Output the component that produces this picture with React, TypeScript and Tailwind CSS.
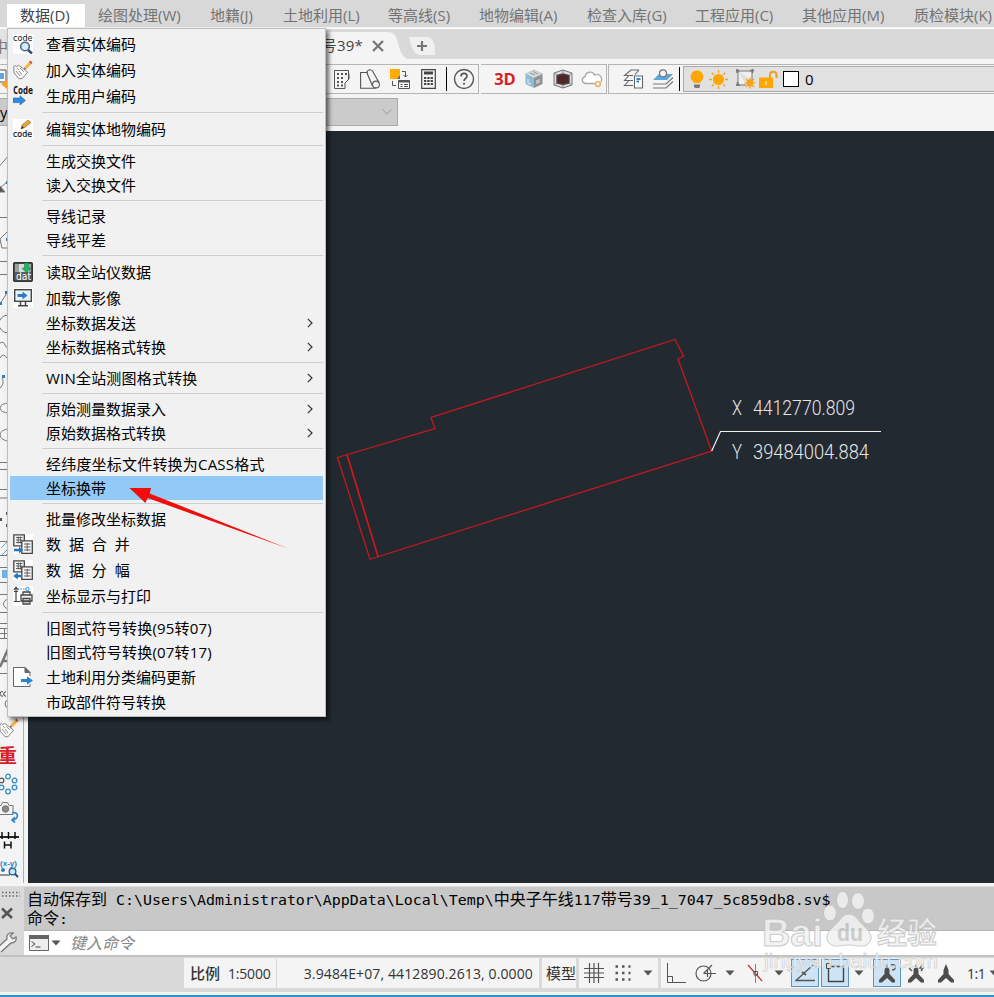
import React from 'react';
import clsx from 'clsx';

interface MenuEntry {
  label?: string;
  icon?: React.ReactNode;
  submenu?: boolean;
  active?: boolean;
  tall?: boolean;
  wide?: boolean;
  mixed?: boolean;
}

const topMenus = [
  { label: '数据(D)', width: 'w-[78px]', open: true },
  { label: '绘图处理(W)', width: 'w-[112px]' },
  { label: '地籍(J)', width: 'w-[73px]' },
  { label: '土地利用(L)', width: 'w-[105px]' },
  { label: '等高线(S)', width: 'w-[91px]' },
  { label: '地物编辑(A)', width: 'w-[108px]' },
  { label: '检查入库(G)', width: 'w-[108px]' },
  { label: '工程应用(C)', width: 'w-[107px]' },
  { label: '其他应用(M)', width: 'w-[112px]' },
  { label: '质检模块(K)', width: 'w-[110px]' },
];

const CodeSearchIcon = () => (
  <svg width="20" height="20" viewBox="0 0 20 20" className="bg-white">
    <text x="0" y="6.500" fontSize="8.500" textLength="19.500" lengthAdjust="spacingAndGlyphs" fontFamily="DejaVu Sans" fill="#111">code</text>
    <circle cx="12" cy="12.500" r="4.300" fill="#dcebf7" stroke="#47698c" strokeWidth="1.600" />
    <path d="M15 16l4 3.500" stroke="#294a70" strokeWidth="2.400" />
  </svg>
);

const TagPencilIcon = () => (
  <svg width="20" height="20" viewBox="0 0 20 20" fill="none">
    <path d="M.7 6.500l2-1 1 1.200 1.700-1.300 1.700.8 7.500 6-5.500 6.500H6L1 13z" fill="#f8f8f8" stroke="#888" />
    <path d="M4 8l2 2M3 11l4 5M7 8l4 4M6 11l3 4" stroke="#999" />
    <path d="M11 9.500l1-3.500 4.500-4.500 2.400 2.300-4.500 4.500z" fill="#f1b74d" />
    <path d="M16 1.800L17.500.500l2 2.200-1.200 1.400z" fill="#d94742" />
    <path d="M11 9.500l.6-2 1.500 1.400z" fill="#444" />
  </svg>
);

const CodeArrowIcon = () => (
  <svg width="20" height="20" viewBox="0 0 20 20">
    <text x="0" y="8" fontSize="10" textLength="20" lengthAdjust="spacingAndGlyphs" fontWeight="700" fontFamily="DejaVu Sans Mono" fill="#111">Code</text>
    <path d="M0 12h7V9.800l5.500 4.600L7 19v-2.400H0z" fill="#308bdf" stroke="#1f65ab" strokeWidth=".6" />
  </svg>
);

const CodeEditIcon = () => (
  <svg width="20" height="20" viewBox="0 0 20 20" className="bg-white">
    <path d="M8 10l1-4 6-5 3 2.400-6 5z" fill="#e6a43f" stroke="#996622" strokeWidth=".6" />
    <path d="M8 10l1-3 2 1.800z" fill="#333" />
    <text x="0" y="18" fontSize="8.500" textLength="19" lengthAdjust="spacingAndGlyphs" fontFamily="DejaVu Sans" fill="#111" stroke="#111" strokeWidth=".2">code</text>
  </svg>
);

const DatIcon = () => (
  <svg width="20" height="20" viewBox="0 0 20 20">
    <rect x=".7" y=".7" width="18.6" height="18.6" rx="1" fill="#5a5a5a" stroke="#333" strokeWidth="1.400" />
    <rect x="2" y="2" width="16" height="8" fill="#9b9f9d" />
    <rect x="6" y="2" width="10" height="8" fill="#d7dcd9" />
    <path d="M11.500 1h4v5H18l-4.500 5L9 6h2.500z" fill="#1fb463" stroke="#127941" strokeWidth=".5" />
    <text x="3" y="18" fontSize="10" textLength="15" lengthAdjust="spacingAndGlyphs" fontFamily="DejaVu Sans" fill="#fff">dat</text>
  </svg>
);

const MonitorIcon = () => (
  <svg width="20" height="20" viewBox="0 0 20 20" className="bg-white">
    <rect x="1.700" y="1.700" width="16.600" height="11.600" fill="#e7f3fb" stroke="#444" strokeWidth="1.400" />
    <path d="M4.500 6h5V3.600l5 3.900-5 3.900V9h-5z" fill="#3478d0" />
    <path d="M7.500 14v3.200M12.500 14v3.200M5 17.800h10" stroke="#444" strokeWidth="1.500" />
  </svg>
);

const SheetsIcon = ({ split }: { split?: boolean }) => (
  <svg width="20" height="20" viewBox="0 0 20 20" className="bg-white" fill="none">
    <path d="M.8.800h10.500v11H.8z" fill="#f5f5f5" stroke="#444" strokeWidth="1.300" />
    <path d="M3 3.500h6.500M3 6h6.500M3 8.500h6M5.200 2.500v7M7.400 2.500v7" stroke="#555" strokeWidth=".9" />
    <path d="M8.800 6.800h10.500v12.500H8.800z" fill="#f5f5f5" stroke="#444" strokeWidth="1.300" />
    <path d="M11 10h6.500M11 13h6.500M11 16h6.500M14.200 9v8" stroke="#555" strokeWidth=".9" />
    {split ? (
      <path d="M9 14.700H4.800v-2.300L.2 16l4.600 3.500v-2.200H9z" fill="#2475c6" />
    ) : (
      <path d="M1 14.700h5v-2.300l4 3.600-4 3.500v-2.200H1z" fill="#2475c6" />
    )}
  </svg>
);

const PrintCoordIcon = () => (
  <svg width="20" height="20" viewBox="0 0 20 20" className="bg-white" fill="none" stroke="#444">
    <path d="M3 2v13.500M.8 4L3 1.200 5.200 4M1 15.500h6M1 5.500h4" strokeWidth="1.200" />
    <path d="M5 3h8" stroke="#328bd0" strokeDasharray="1.500 1" />
    <circle cx="14.500" cy="3" r="1.700" stroke="#328bd0" />
    <path d="M10 9V6h7v3M8 9h11v6H8zM10 12.500h7V18h-7zM11 15.500h5" strokeWidth="1.300" fill="#f2f2f2" />
  </svg>
);

const PageArrowIcon = () => (
  <svg width="20" height="20" viewBox="0 0 20 20" fill="none">
    <path d="M17 9V5.500L12 .500H.5v19H17V17" fill="#fff" stroke="#666" />
    <path d="M12 .500v5h5z" fill="#666" stroke="#666" />
    <path d="M8 12h6V9.200l6 4.300-6 4.300V15H8z" fill="#2586cf" />
  </svg>
);

const menuGroups: MenuEntry[][] = [
  [
    { label: '查看实体编码', icon: <CodeSearchIcon />, tall: true },
    { label: '加入实体编码', icon: <TagPencilIcon />, tall: true },
    { label: '生成用户编码', icon: <CodeArrowIcon />, tall: true },
  ],
  [{ label: '编辑实体地物编码', icon: <CodeEditIcon />, tall: true }],
  [{ label: '生成交换文件' }, { label: '读入交换文件' }],
  [{ label: '导线记录' }, { label: '导线平差' }],
  [
    { label: '读取全站仪数据', icon: <DatIcon />, tall: true },
    { label: '加载大影像', icon: <MonitorIcon />, tall: true },
    { label: '坐标数据发送', submenu: true },
    { label: '坐标数据格式转换', submenu: true },
  ],
  [{ label: 'WIN全站测图格式转换', submenu: true, mixed: true }],
  [
    { label: '原始测量数据录入', submenu: true },
    { label: '原始数据格式转换', submenu: true },
  ],
  [{ label: '经纬度坐标文件转换为CASS格式', mixed: true }, { label: '坐标换带', active: true }],
  [
    { label: '批量修改坐标数据' },
    { label: '数 据 合 并', icon: <SheetsIcon />, tall: true, wide: true },
    { label: '数 据 分 幅', icon: <SheetsIcon split />, tall: true, wide: true },
    { label: '坐标显示与打印', icon: <PrintCoordIcon />, tall: true },
  ],
  [
    { label: '旧图式符号转换(95转07)', mixed: true },
    { label: '旧图式符号转换(07转17)', mixed: true },
    { label: '土地利用分类编码更新', icon: <PageArrowIcon />, tall: true },
    { label: '市政部件符号转换' },
  ],
];

const MenuItem: React.FC<{ entry: MenuEntry }> = ({ entry }) => (
  <li
    className={clsx(
      'mx-0.5 flex items-center pl-[3px] text-[15px] leading-none text-black',
      entry.tall ? 'h-[26px]' : 'h-6',
      entry.active && 'bg-[#91c9f7]'
    )}
  >
    <span className="flex w-[33px] shrink-0">{entry.icon}</span>
    <span
      className={clsx(
        'whitespace-pre',
        entry.wide && '[word-spacing:4px]',
        entry.mixed && 'tracking-[0.2px]'
      )}
    >
      {entry.label}
    </span>
    {entry.submenu && (
      <svg width="6" height="10" viewBox="0 0 6 10" fill="none" className="mr-[10px] ml-auto">
        <path d="M.8.800L5 5 .8 9.200" stroke="#333" strokeWidth="1.200" />
      </svg>
    )}
  </li>
);

const DataMenu = () => (
  <div className="absolute top-[28px] left-[7px] w-[319px] border border-[#bdbdbd] bg-[#f1f1f1] pt-0.5 pb-0.5 shadow-[3px_3px_4px_rgba(0,0,0,0.55)]">
    {menuGroups.map((group, i) => (
      <React.Fragment key={i}>
        {i > 0 && (
          <div className="flex h-[7px] items-center pr-0.5 pl-[34px]">
            <div className="h-px w-full bg-[#cfcfcf]" />
          </div>
        )}
        <ul>
          {group.map((entry) => (
            <MenuItem key={entry.label} entry={entry} />
          ))}
        </ul>
      </React.Fragment>
    ))}
  </div>
);

const TabStrip = () => (
  <div className="relative flex h-[31px] overflow-hidden border-t border-white bg-[#d9d9d9]">
    <div className="flex w-[300px] shrink-0 items-center bg-[#e2e2e2] pt-1 text-[15px] text-[#777]">
      <span className="-ml-[7px]">中</span>
    </div>
    <div className="mt-[3px] flex w-[88px] shrink-0 items-center justify-end bg-[#f4f4f4] text-[15px] text-[#444]">
      <span className="shrink-0 tracking-[0.2px] whitespace-nowrap">号39*</span>
      <svg width="12" height="12" viewBox="0 0 12 12" className="mr-1 ml-[9px] shrink-0">
        <path d="M1 1l10 10M11 1L1 11" stroke="#777" strokeWidth="2.300" />
      </svg>
    </div>
    <svg width="21" height="28" viewBox="0 0 21 28" className="mt-[3px] shrink-0">
      <path d="M0 0c6 0 8 4 10 11s3 13 11 17H0z" fill="#f4f4f4" />
    </svg>
    <svg width="27" height="18" viewBox="0 0 27 18" className="mt-[8px] shrink-0">
      <path d="M0 0h18c6 0 8 6 8 18H12C5 18 2 10 0 0z" fill="#f0f0f0" />
      <path d="M13 4v10M8 9h10" stroke="#777" strokeWidth="2.200" />
    </svg>
  </div>
);

const Slot: React.FC<{ className?: string; children: React.ReactNode }> = ({ className, children }) => (
  <span className={clsx('flex shrink-0 items-center justify-center', className ?? 'w-[29px]')}>{children}</span>
);

const Toolbar = () => (
  <div className="h-[72px] bg-[#f4f4f4] pt-[5px]">
    <div className="flex h-[30px]">
      <div className="flex w-[479px] shrink-0 items-center border border-l-0 border-[#b5b5b5]">
        <svg width="20" height="22" viewBox="0 0 20 22" className="-ml-[13px] mr-auto">
          <path d="M3 2h16v12H3z" fill="#fff" stroke="#555" />
          <path d="M8 5h9v6H8z" fill="#65a6d8" />
          <path d="M14 16l6-4v9z" fill="#f5a623" />
        </svg>
        <Slot>
          <svg width="16" height="19" viewBox="0 0 16 19" fill="none" stroke="#555">
            <path d="M11 18.500H.5V.500h14V10M11 18.500V13l4-4v-5" />
            <path d="M3 4h2M7 4h2M11 4h2M3 8h2M7 8h2M3 12h2M7 12h2M3 15.500h2M7 15.500h2" strokeWidth="1.800" />
          </svg>
        </Slot>
        <Slot>
          <svg width="21" height="20" viewBox="0 0 21 20" fill="none" stroke="#555" strokeWidth="1.100">
            <path d="M7.500 3.500H.6v15.800h15" />
            <path d="M12.500 17L7 4c-.5-3 3.500-4.500 5.500-2L19 13.500" />
            <circle cx="16" cy="15.500" r="3.400" />
          </svg>
        </Slot>
        <Slot>
          <svg width="20" height="20" viewBox="0 0 20 20" fill="none" stroke="#555">
            <path d="M0 0h10v10H7l-3 0H0z" fill="#ffab00" stroke="none" />
            <path d="M7 10l3-4v4z" fill="#666" stroke="none" />
            <path d="M12 2.500h3.500V8M13.500 6l2 2 2-2M2.500 12v4.500H6" />
            <path d="M8.500 11.500h11v8h-11z" fill="#fff" />
            <path d="M8.500 12.500h11" strokeWidth="2" />
            <path d="M10.500 15.500h2M14 15.500h4M10.500 17.500h2M14 17.500h4" />
          </svg>
        </Slot>
        <Slot>
          <svg width="15" height="20" viewBox="0 0 15 20" fill="none" stroke="#444">
            <path d="M.7.700h13.600v18.600H.7z" strokeWidth="1.200" />
            <path d="M3 4h9" strokeWidth="3" />
            <path d="M3 9h9M3 12h9M3 15h9" strokeWidth="2" strokeDasharray="2.300 1" />
          </svg>
        </Slot>
        <span className="ml-[3px] h-6 w-px shrink-0 bg-black" />
        <Slot className="ml-[2px] w-[29px]">
          <svg width="22" height="22" viewBox="0 0 22 22" fill="none" stroke="#555">
            <circle cx="11" cy="11" r="9.500" strokeWidth="1.400" />
            <path d="M8 8.500c0-4 6-4 6-.500 0 2.500-3 2.500-3 5M11 14.800v1.900" strokeWidth="1.700" />
          </svg>
        </Slot>
      </div>
      <div className="ml-0.5 flex w-[126px] shrink-0 items-center border border-l-0 border-[#b5b5b5] pl-2.5">
        <Slot className="w-[28px] text-[16.5px] font-bold text-[#d71e26]">3D</Slot>
        <Slot>
          <svg width="20" height="20" viewBox="0 0 20 20">
            <path d="M10 1l8.500 4L10 9 1.500 5z" fill="#d9dddf" stroke="#aaa" strokeWidth=".6" />
            <path d="M1.500 5L10 9v10l-8.500-4z" fill="#8cbcd6" />
            <path d="M18.500 5L10 9v10l8.500-4z" fill="#8b9296" />
            <path d="M4 10v4l3 1M13 11v4M15 10v4" stroke="#eee" fill="none" />
            <path d="M6 4l5 2M9 2.500l5 2.500" stroke="#8a9499" />
          </svg>
        </Slot>
        <Slot>
          <svg width="20" height="20" viewBox="0 0 20 20" fill="none">
            <path d="M10 1l9 3v12l-9 3-9-3V4z" fill="#ddd" stroke="#777" />
            <path d="M4 6.500l6-1.500 6 1.500v7.500l-6 1.500L4 14z" fill="#54242a" stroke="#444" strokeWidth="1.400" />
            <path d="M1 4l3 2.500M19 4l-3 2.500M1 16l3-2M19 16l-3-2M10 1v4M10 15.500V19" stroke="#888" />
          </svg>
        </Slot>
        <Slot>
          <svg width="22" height="18" viewBox="0 0 22 18" fill="none">
            <path d="M5 13.500H4a3.500 3.500 0 0 1 0-6.800A5 5 0 0 1 13.500 5a4.300 4.300 0 0 1 4.500 8.500z" fill="#fff" stroke="#aaa" strokeWidth="1.400" />
            <circle cx="17" cy="14" r="2.300" fill="#fff" stroke="#efb77b" strokeWidth="1.800" />
          </svg>
        </Slot>
      </div>
      <div className="ml-px flex flex-1 items-center border border-r-0 border-[#b5b5b5] pl-[10px]">
        <Slot>
          <svg width="21" height="20" viewBox="0 0 21 20" fill="none" stroke="#666" strokeWidth="1.100">
            <path d="M16 1H8L1.500 6.500H10M16 1l-4 4.500M5.500 7l-4 4.500H10M5.500 12l-4 4.500H10" />
            <path d="M11.500 7h8v12h-8z" fill="#fff" />
            <path d="M13.500 10h4M13.500 12.500h2.500" stroke="#2988cc" strokeWidth="1.800" />
          </svg>
        </Slot>
        <Slot>
          <svg width="22" height="21" viewBox="0 0 22 21" fill="none" stroke="#777" strokeWidth="1.200">
            <path d="M1 11l6-6h14l-6 6z" fill="#5ba5d8" stroke="none" />
            <circle cx="11" cy="4.300" r="3.500" fill="#f4f4f4" />
            <path d="M1 15h13l7-6.500M1 19h13l7-6.500" />
          </svg>
        </Slot>
        <span className="ml-0.5 h-6 w-px bg-black" />
        <div className="ml-[3px] flex h-[26px] flex-1 items-center border border-r-0 border-[#aaa] bg-[#e1e1e1] pl-[3px]">
          <Slot className="w-5">
            <svg width="14" height="19" viewBox="0 0 14 19">
              <path d="M7 .500a6.300 6.300 0 0 1 4 11.200L10 13H4l-1-1.300A6.300 6.300 0 0 1 7 .500z" fill="#ffa600" />
              <path d="M4 14.500h6v2L9 18H5l-1-1.500z" fill="#777" />
            </svg>
          </Slot>
          <Slot className="w-[22px]">
            <svg width="19" height="19" viewBox="0 0 19 19" stroke="#f5a31a" strokeWidth="1.300">
              <circle cx="9.500" cy="9.500" r="5.500" fill="#ffa600" stroke="none" />
              <path d="M9.500 0v3M9.500 16v3M0 9.500h3M16 9.500h3M2.800 2.800l2 2M14.200 14.200l2 2M16.200 2.800l-2 2M4.800 14.200l-2 2" />
            </svg>
          </Slot>
          <Slot className="ml-[5px] w-[23px]">
            <svg width="20" height="20" viewBox="0 0 20 20" fill="none" stroke="#777">
              <path d="M2 2h14v9M10 16H2V2" fill="#f0f0f0" />
              <path d="M0 1.500h3.500M1 0v4M14 1.500h4M16.500 0v4M0 16h4M1.500 13v4" strokeWidth="1.600" />
              <circle cx="14" cy="14" r="3.500" fill="#ffa600" stroke="none" />
              <path d="M14 8.500v11M8.500 14h11M10 10l8 8M18 10l-8 8" stroke="#f5a31a" strokeWidth="1.200" />
            </svg>
          </Slot>
          <Slot className="w-[22px]">
            <svg width="19" height="19" viewBox="0 0 19 19" fill="none">
              <path d="M11 8V5c0-4.500 6.500-4.500 6.500 0v3" stroke="#e8a02b" strokeWidth="2" />
              <path d="M0 7.500h14V18H0z" fill="#ffa600" />
              <path d="M7 11v4" stroke="#fff4cd" strokeWidth="1.200" />
            </svg>
          </Slot>
          <span className="ml-1 h-4 w-4 border border-black bg-white" />
          <span className="ml-1.5 text-[15px] text-black">0</span>
        </div>
      </div>
    </div>
    <div className="mt-[4px] flex h-[28px] w-[398px] items-center justify-between border border-[#aaa] border-l-0 bg-[#cbcbcb] pr-[5px]">
      <span className="text-[15px] text-black">y</span>
      <svg width="10" height="6" viewBox="0 0 10 6" fill="none">
        <path d="M.5.500L5 5 9.500.500" stroke="#999" />
      </svg>
    </div>
  </div>
);

const Tool: React.FC<{ children: React.ReactNode }> = ({ children }) => (
  <div className="-ml-px flex h-7 w-5 shrink-0 items-center">{children}</div>
);

const DrawTools = () => (
  <div className="flex w-7 shrink-0 flex-col overflow-hidden bg-[#f4f4f4]">
    <div className="w-6 flex-1 border-r border-[#b0b0b0]">
      {/* draw and modify tools, mostly behind the open menu */}
      <svg width="23" height="583" viewBox="0 131 23 583" fill="none" stroke="#777">
        <path d="M-3 169L9 155M-1 189L9 180M0 217.500h20M0 239l7-7M0 239l2 9h9M0 261.500h20M0 274.500h20" />
        <path d="M-1 185v7h6z" fill="#555" />
        <path d="M0 304l7-11" />
        <path d="M0 302h2v3H0zM5 291h2v3H5zM6 181h2v3H6zM6 238h3v3H6z" fill="#2b80c1" stroke="none" />
        <circle cx="8" cy="324" r="9" />
        <path d="M7 322h2" stroke="#2b80c1" strokeWidth="2" />
        <path d="M0 343q4-2 5 2t5 1M0 358q3-6 7 0" />
        <path d="M0 388c3-2 4-7 2-10" />
        <path d="M2 375h3v3H2z" fill="#2b80c1" stroke="none" />
        <ellipse cx="9" cy="408" rx="9" ry="5" />
        <ellipse cx="9" cy="435" rx="9" ry="6" />
        <path d="M0 462.500h20M0 469.500h20M0 489.500h20M0 498h20" />
        <path d="M0 518h2v3H0zM6 512h2v3H6zM6 524h2v3H6z" fill="#555" stroke="none" />
        <path d="M0 541.500h20v14H0" />
        <path d="M1 548l6-6M2 555l8-8M6 555l4-4" stroke="#69a7d5" />
        <path d="M0 567.500h20v15H0" />
        <path d="M2 570h9v8H2z" fill="#6fb2e2" stroke="none" />
        <path d="M0 594.500h20M0 612.500h20" />
        <circle cx="8" cy="604" r="4.500" />
        <path d="M0 623.500h20M0 628.500h20M0 633.500h20M0 638.500h20M4.500 628v11" />
        <path d="M0 667l8-18M3 661h5" strokeWidth="2.500" />
        <path d="M0 673.500h20" />
        <path d="M3 692c-4-2-4 5 0 4M6 692c-3-1-3 5 0 4" stroke="#333" />
        <circle cx="9" cy="704" r="4" />
      </svg>
      <Tool>
        <TagPencilIcon />
      </Tool>
      <Tool>
        <span className="-ml-px text-[19px] leading-none font-bold text-[#d8202a]">重</span>
      </Tool>
      <Tool>
        <svg width="20" height="22" viewBox="0 0 20 22" fill="none" stroke="#388dc3" strokeWidth="1.300">
          <circle cx="9" cy="3.500" r="2.300" />
          <circle cx="15.500" cy="7.500" r="2.300" />
          <circle cx="15.500" cy="14.500" r="2.300" />
          <circle cx="9" cy="18.500" r="2.300" />
          <circle cx="2.500" cy="14.500" r="2.300" />
          <circle cx="2.500" cy="7.500" r="2.300" stroke="#555" />
        </svg>
      </Tool>
      <Tool>
        <svg width="20" height="22" viewBox="0 0 20 22" fill="none" stroke="#777">
          <path d="M-2 4.500h4l1.500-3h5l1.500 3h4v9h-16z" />
          <circle cx="6.500" cy="8" r="3.300" fill="#888" />
          <path d="M13 12c7-2 7 6 1 7M16 16l-3 3 3 2.500" stroke="#3189c6" strokeWidth="1.700" />
        </svg>
      </Tool>
      <Tool>
        <svg width="20" height="20" viewBox="0 0 20 20" fill="none" stroke="#111">
          <path d="M0 7h20" strokeWidth="1.800" />
          <path d="M3 2v7M9.500 2v7M16 2v7M5.500 11.500v7M12 11.500v7M5 15h7" strokeWidth="1.500" />
        </svg>
      </Tool>
      <Tool>
        <svg width="20" height="20" viewBox="0 0 20 20" fill="none">
          <text x="1" y="7.500" fontSize="8" textLength="17" lengthAdjust="spacingAndGlyphs" fontWeight="700" fontFamily="Liberation Sans" fill="#2b80c1">(x-y)</text>
          <circle cx="4" cy="12" r="2" fill="#2b80c1" />
          <path d="M1 17h10" stroke="#333" />
          <circle cx="13.500" cy="13.500" r="3.300" fill="#d2e8f8" stroke="#2e6c9f" strokeWidth="1.400" />
          <path d="M16 16l3 3" stroke="#294a70" strokeWidth="2" />
        </svg>
      </Tool>
    </div>
  </div>
);

const Drawing = () => (
  <svg width="966" height="752" viewBox="28 131 966 752" fill="none" className="bg-[#222930]">
    <path
      d="M337.500 457.500L435 428.500 431 417.500 675 339.500 683.700 356 678 359 711.700 451 370 559.300z"
      stroke="#cb171c"
      strokeWidth="1.300"
    />
    <path d="M347 454.700L378.200 557" stroke="#dc151b" strokeWidth="1.600" />
    <path d="M711.700 451L720.500 431.500H881" stroke="#f0f0f0" strokeWidth="1.200" />
    <g fill="#e6e6e6" fontFamily="Roboto" fontWeight="300" fontSize="20">
      <text x="732" y="414.500" textLength="10" lengthAdjust="spacingAndGlyphs">X</text>
      <text x="753" y="414.500" textLength="102" lengthAdjust="spacingAndGlyphs">4412770.809</text>
      <text x="732" y="458.500" textLength="10" lengthAdjust="spacingAndGlyphs">Y</text>
      <text x="753" y="458.500" textLength="116" lengthAdjust="spacingAndGlyphs">39484004.884</text>
    </g>
  </svg>
);

const Caret: React.FC<{ className?: string }> = ({ className }) => (
  <svg width="10" height="6" viewBox="0 0 10 6" className={clsx('shrink-0', className)}>
    <path d="M.5.500h9L5 5.500z" fill="#555" />
  </svg>
);

const CommandPanel = () => (
  <div className="mt-[3px] flex h-[71px] border-t border-b-2 border-t-[#dcdcdc] border-b-[#c2c2c2] bg-[#d9d9d9]">
    <div className="w-6 shrink-0 pt-1">
      <svg width="24" height="64" viewBox="0 0 24 64" fill="none">
        <path d="M2 1.500h18M2 5h18" stroke="#666" strokeWidth="1.500" strokeDasharray="1.500 2" />
        <path d="M2 17.500l10 9.500M12 17.500L2 27" stroke="#555" strokeWidth="2.500" />
        <path d="M-3 57l10-9c-1-4 2-7 6-6l-3 3 3 3 3-2c1 4-2 6-5 6L1 61" fill="#f3f3f3" stroke="#777" strokeWidth="1.300" />
      </svg>
    </div>
    <div className="flex flex-1 flex-col">
      <div className="h-[44px] border-b border-[#b4b4b4] bg-[#c8c8c8] pt-[3px] pl-[3px] font-['DejaVu_Sans_Mono','Noto_Sans_CJK_SC',monospace] text-[14.95px] leading-[19px] whitespace-pre text-black">
        <div className="h-[19px]">
          <span className="text-[16px]">自动保存到</span>
          {' C:\\Users\\Administrator\\AppData\\Local\\Temp\\'}
          <span className="text-[16px]">中央子午线</span>117<span className="text-[16px]">带号</span>39_1_7047_5c859db8.sv$
        </div>
        <div className="h-[19px]">
          <span className="text-[16px]">命令</span>:
        </div>
      </div>
      <div className="flex flex-1 items-center bg-white pl-[5px]">
        <svg width="20" height="16" viewBox="0 0 20 16" fill="none">
          <path d="M.5.500h19v15H.5z" fill="#eee" stroke="#666" />
          <path d="M0 2h20" stroke="#666" strokeWidth="4" />
          <path d="M2.500 6.500L6 9l-3.500 2.500M6.500 12h5" stroke="#444" />
        </svg>
        <Caret className="ml-[2px]" />
        <span className="ml-[9px] text-[16px] leading-none text-[#888] italic">键入命令</span>
      </div>
    </div>
  </div>
);

const Person: React.FC<{ mark?: string }> = ({ mark }) => (
  <svg width="20" height="21" viewBox="0 0 20 21" fill="none">
    <path d="M10 1l2.500 6v4l5.500 6v2.500h-3L10 15l-5 4.500H2V17l5.500-6V7z" fill="#4d4d4d" />
    {mark && <path d={mark} stroke="#555" strokeWidth="1.400" />}
  </svg>
);

const StatusBar = () => (
  <div className="flex h-[35px] items-start bg-[#d9d9d9] pt-px text-[15px] text-[#333]">
    <div className="ml-[184px] flex h-[30px] w-[92px] shrink-0 items-center bg-[#f4f4f4] pl-1.5 whitespace-pre">
      <span className="font-medium">比例</span>
      <span className="ml-[8px] text-[14px] tracking-[-0.2px]">1:5000</span>
    </div>
    <div className="ml-px flex h-[30px] w-[262px] shrink-0 items-center justify-end bg-[#f4f4f4] pr-1.5 text-[14px] tracking-[0.12px] whitespace-pre">
      3.9484E+07, 4412890.2613, 0.0000
    </div>
    <div className="ml-[3px] flex h-[30px] w-[34px] shrink-0 items-center bg-[#f4f4f4] pl-1">
      <span className="whitespace-nowrap">模型</span>
    </div>
    <div className="ml-[3px] flex h-[30px] w-[79px] shrink-0 items-center bg-[#f4f4f4] pl-[5px]">
      <svg width="20" height="20" viewBox="0 0 20 20" stroke="#555" strokeWidth="1.200">
        <path d="M5.500 0v20M10 0v20M14.500 0v20M0 5.500h20M0 10h20M0 14.500h20" />
      </svg>
      <svg width="16" height="16" viewBox="0 0 16 16" className="ml-[11px]" stroke="#555" strokeWidth="2.500" strokeDasharray="2.500 4">
        <path d="M.500 1.500h15M.500 8h15M.500 14.500h15" />
      </svg>
      <Caret className="ml-[12px]" />
    </div>
    <div className="ml-[3px] flex h-[30px] flex-1 items-center overflow-hidden bg-[#f4f4f4] pl-[5px]">
      <svg width="20" height="21" viewBox="0 0 20 21" fill="none" stroke="#555" className="shrink-0">
        <path d="M1.500 0v19.500H20M1.500 13.500h5v6" />
      </svg>
      <svg width="21" height="18" viewBox="0 0 21 18" fill="none" stroke="#555" strokeWidth="1.200" className="ml-[9px] shrink-0">
        <circle cx="8.500" cy="9.500" r="7.500" />
        <path d="M8.500 9.500H21M8.500 9.500L17 1M12.500 6v7" />
      </svg>
      <Caret className="ml-[9px]" />
      <svg width="16" height="19" viewBox="0 0 16 19" fill="none" className="ml-[12px] shrink-0">
        <path d="M1 1l14 16" stroke="#c43c42" strokeWidth="1.300" />
        <path d="M8.500 0v19" stroke="#45a566" />
        <path d="M7 7.500h3.500V11H7z" stroke="#555" />
      </svg>
      <Caret className="ml-[11px]" />
      <span className="ml-[7px] flex h-7 w-[28px] shrink-0 items-center justify-center border border-[#5c94c8] bg-[#cde4f7]">
        <svg width="20" height="18" viewBox="0 0 20 18" fill="none" stroke="#555">
          <path d="M18 1L1 16.500h19" strokeWidth="1.300" />
          <path d="M7 8l4 3" strokeWidth="1.800" />
        </svg>
      </span>
      <span className="ml-[2px] flex h-7 w-[28px] shrink-0 items-center justify-center border border-[#5c94c8] bg-[#cde4f7]">
        <svg width="19" height="20" viewBox="0 0 19 20" fill="none" stroke="#444">
          <path d="M2.500 3.500h15v15h-15z" strokeWidth="1.400" />
          <path d="M.500.500h4v5h-4z" fill="#cde4f7" />
        </svg>
      </span>
      <Caret className="ml-[5px]" />
      <span className="ml-[9px] flex h-7 w-[28px] shrink-0 items-center justify-center border border-[#5c94c8] bg-[#cde4f7]">
        <Person mark="M14 2c5-2 6 5 1 5" />
      </span>
      <span className="ml-[5px] shrink-0">
        <Person mark="M17 1l-3 4h3l-2 3M3 5l3 3" />
      </span>
      <span className="ml-[10px] shrink-0">
        <Person />
      </span>
      <span className="ml-[11px] text-[14px] tracking-[-0.5px]">1:1</span>
      <Caret className="ml-[4px]" />
    </div>
  </div>
);

const Watermark = () => (
  <svg width="180" height="88" viewBox="760 888 180 88" className="absolute top-[888px] left-[760px]" opacity=".85">
    <g fill="#f2f2f2" stroke="#c2c2c2" strokeWidth="1" fontFamily="Liberation Sans, Noto Sans CJK SC" fontWeight="700">
      <text x="762" y="946" fontSize="39" textLength="61" lengthAdjust="spacingAndGlyphs">Bai</text>
      <ellipse cx="830" cy="913" rx="6.500" ry="8" />
      <ellipse cx="842.500" cy="900" rx="6" ry="8.500" />
      <ellipse cx="858" cy="901" rx="6.500" ry="8.500" />
      <ellipse cx="868" cy="916" rx="6.500" ry="8" />
      <path d="M849 914c7 0 9 7 15 12 8 7 9 13 4 18-5 4-12 1-19 1s-14 3-19-1c-5-5-4-11 4-18 6-5 8-12 15-12z" />
      <text x="837" y="941" fontSize="24" textLength="26" lengthAdjust="spacingAndGlyphs" fill="#c4c4c4" stroke="none">du</text>
      <text x="877" y="943" fontSize="30" textLength="60">经验</text>
    </g>
    <text x="764" y="968" fontSize="20" textLength="174" lengthAdjust="spacingAndGlyphs" fontFamily="Liberation Sans" fill="#fff" stroke="#c2c2c2" strokeWidth=".6">jingyan.baidu.com</text>
  </svg>
);

const App: React.FC = () => {
  return (
    <div className="relative flex h-[997px] w-[994px] flex-col overflow-hidden bg-[#f4f4f4] font-['Open_Sans','Noto_Sans_CJK_SC',sans-serif]">
      <nav className="flex h-[27px] shrink-0 bg-[#d8d8d8] pt-1 pl-[7px] text-[15px] text-[#737373]">
        {topMenus.map((menu) => (
          <div
            key={menu.label}
            className={clsx(
              'flex shrink-0 items-center pl-[13px] leading-none whitespace-nowrap',
              menu.width,
              menu.open && 'bg-white text-[#444]'
            )}
          >
            {menu.label}
          </div>
        ))}
      </nav>
      <div className="h-px shrink-0 bg-[#f4f4f4]" />
      <TabStrip />
      <Toolbar />
      <main className="flex h-[752px] shrink-0">
        <DrawTools />
        <Drawing />
      </main>
      <CommandPanel />
      <StatusBar />
      <div className="mt-[3px] h-[2px] bg-[#2895c8]" />
      <DataMenu />
      <svg width="160" height="64" viewBox="129 486 160 64" className="absolute top-[486px] left-[129px]">
        <path d="M129.500 488L151 488l-1.300 5.500L288 548.500 147.700 498l-2.400 5z" fill="#f20d0d" />
      </svg>
      <Watermark />
    </div>
  );
};

export default App;
